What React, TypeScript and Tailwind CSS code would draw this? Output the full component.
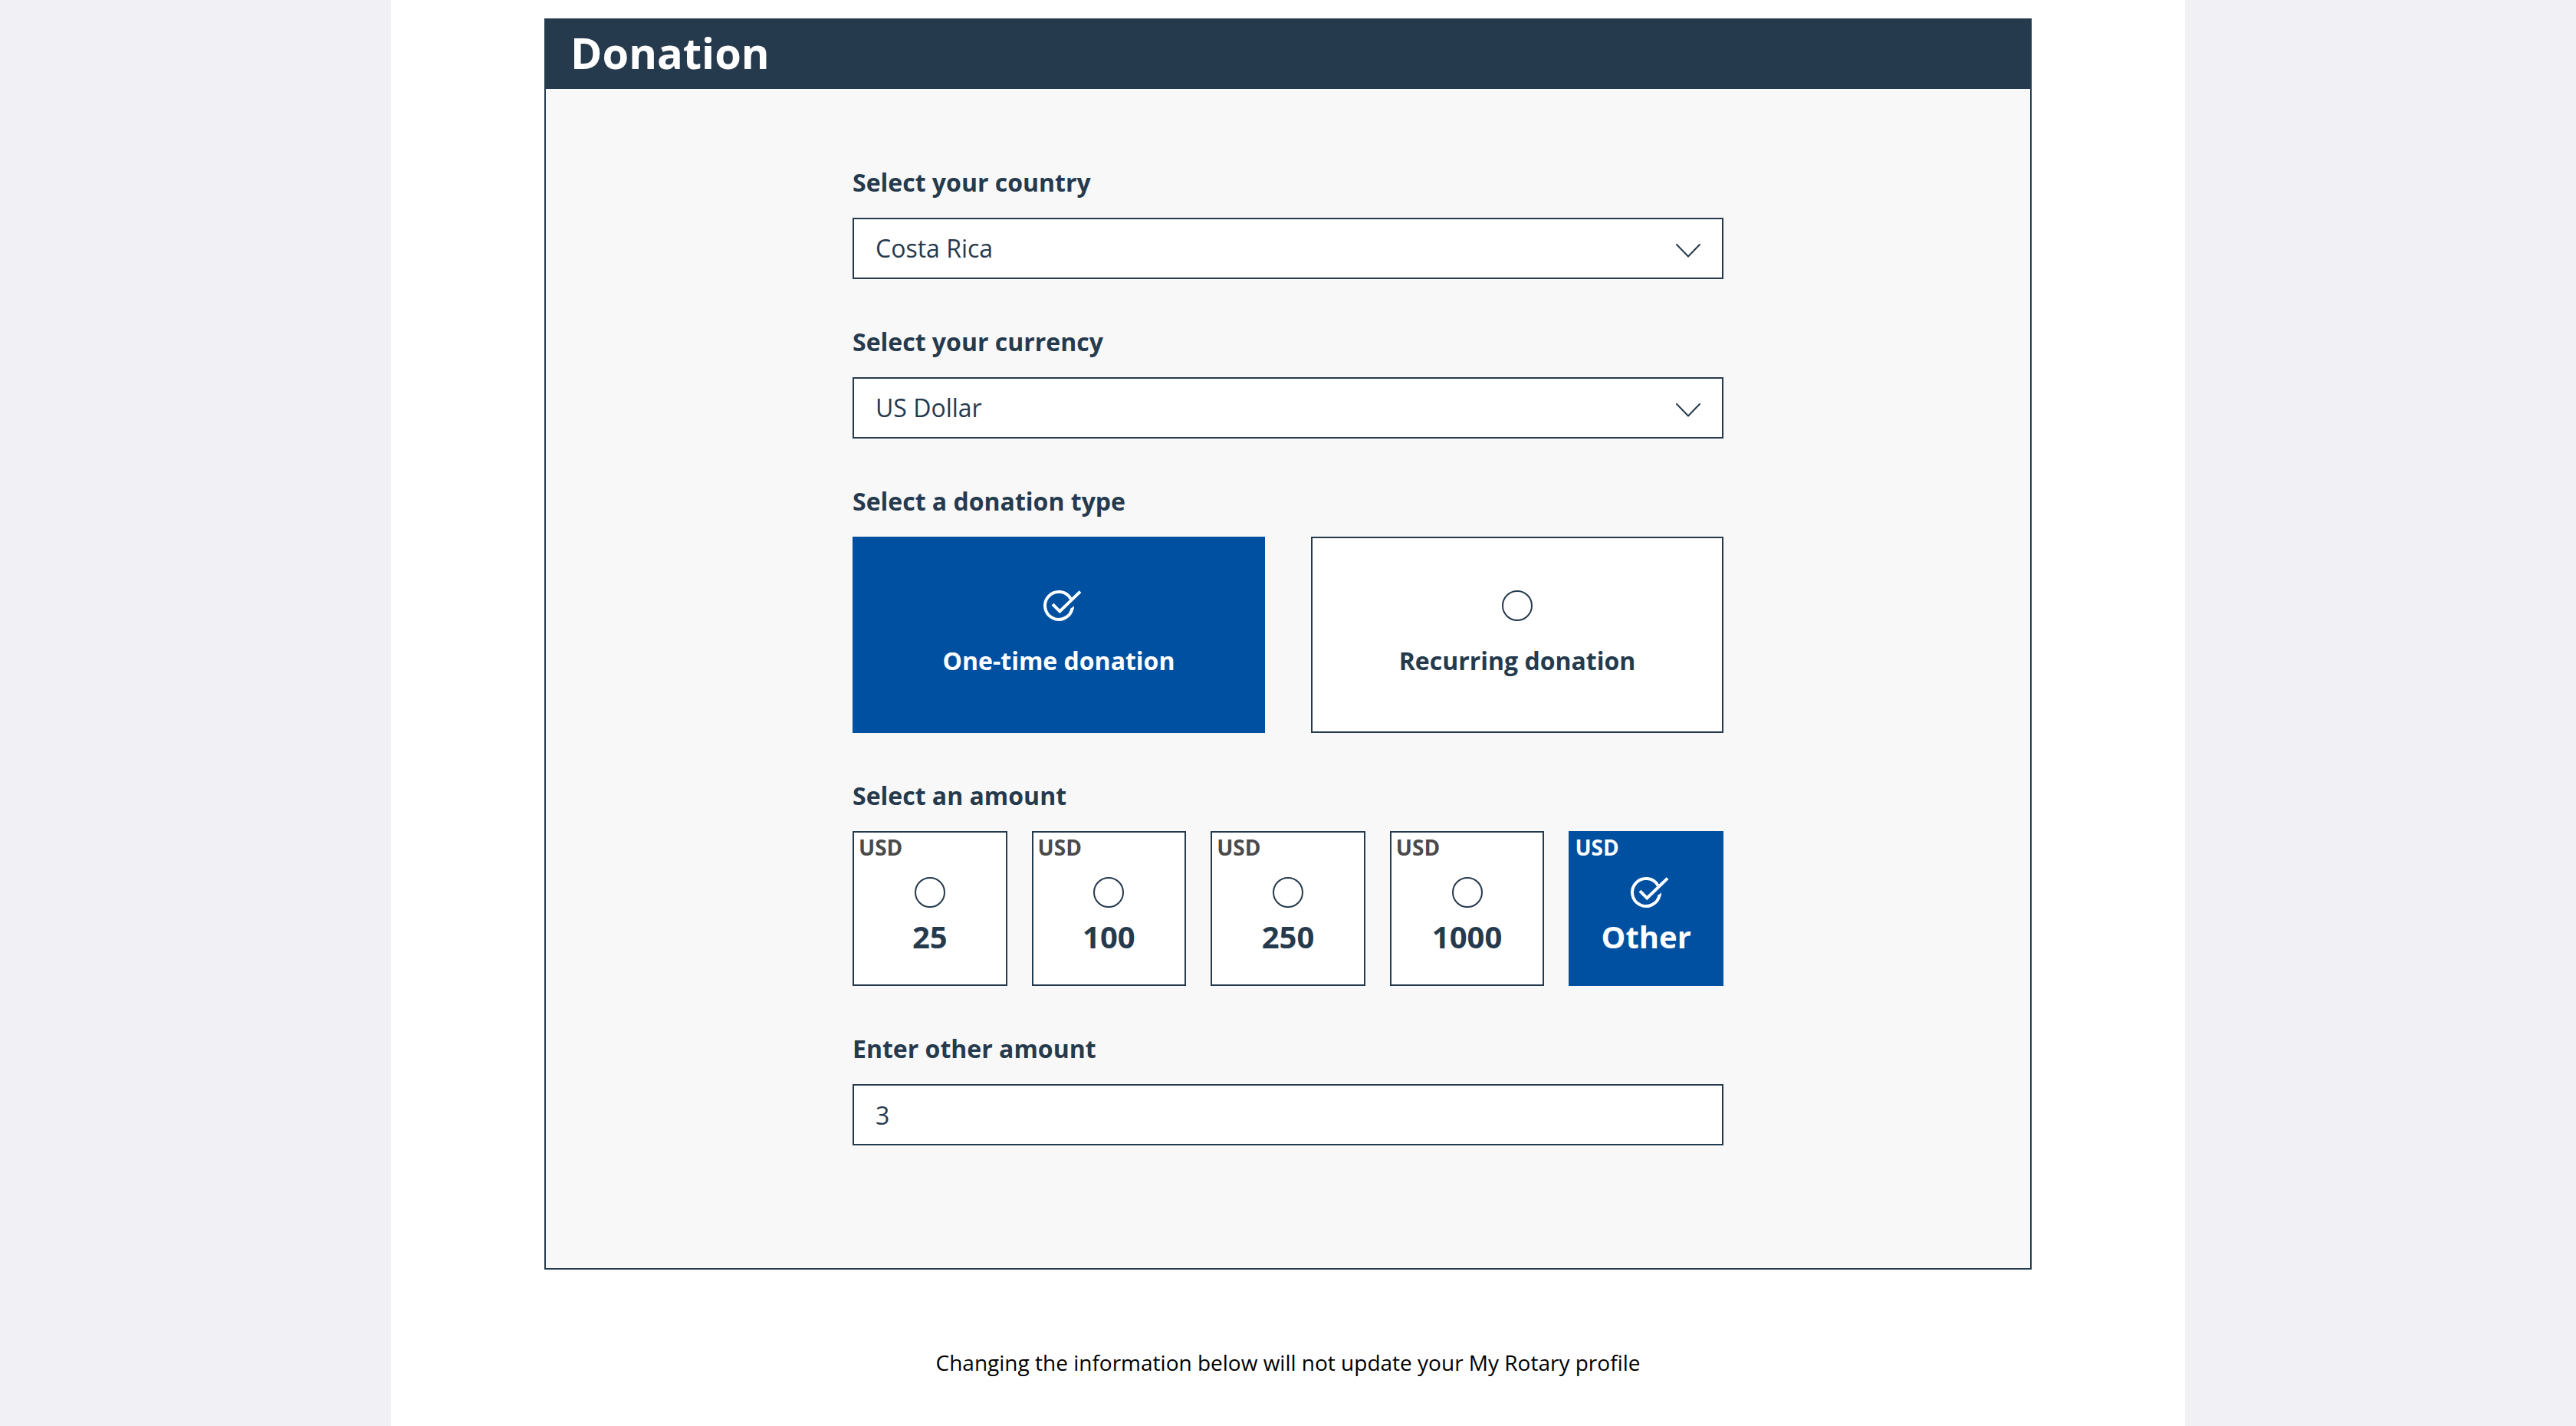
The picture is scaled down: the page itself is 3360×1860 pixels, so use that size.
import { useState, type ReactNode } from "react";

const countries = ["Costa Rica", "Canada", "Mexico", "United States"];
const currencies = ["US Dollar", "Canadian Dollar", "Euro"];
const amounts = ["25", "100", "250", "1000", "Other"];

// The tick reaches past the right edge of the box so that the ring stays centred.
function CheckIcon() {
  return (
    <svg className="size-10 overflow-visible" viewBox="0 0 40 40" fill="none" stroke="currentColor" strokeWidth="4" aria-hidden="true">
      <path d="M35.6 11A18 18 0 1 0 37.7 23.2" />
      <path d="M35.6 24L40 20.2L39.8 24Z" fill="currentColor" stroke="none" />
      <path d="M12 18.2L21.3 27.5L48 1.6" />
    </svg>
  );
}

function CircleIcon() {
  return (
    <svg className="size-10" viewBox="0 0 40 40" fill="none" stroke="currentColor" strokeWidth="2" aria-hidden="true">
      <circle cx="20" cy="20" r="19" />
    </svg>
  );
}

function Field({ id, label, children }: { id: string; label: string; children: ReactNode }) {
  return (
    <div className="flex flex-col gap-6">
      <label htmlFor={id} className="text-[32px] leading-[44px] font-bold">
        {label}
      </label>
      {children}
    </div>
  );
}

function SelectField({ id, label, options }: { id: string; label: string; options: string[] }) {
  return (
    <Field id={id} label={label}>
      <div className="relative">
        <select
          id={id}
          className="block h-20 w-full appearance-none rounded-none border-2 border-[#263a4d] bg-white px-7 text-[32px]"
        >
          {options.map((option) => (
            <option key={option}>{option}</option>
          ))}
        </select>
        <svg
          className="pointer-events-none absolute top-8 right-7 h-5 w-9"
          viewBox="0 0 36 20"
          fill="none"
          stroke="currentColor"
          strokeWidth="2"
          strokeLinecap="round"
          aria-hidden="true"
        >
          <path d="M3 3L18 18.5L33 3" />
        </svg>
      </div>
    </Field>
  );
}

type ChoiceProps = { name: string; value: string; checked: boolean; onSelect: (value: string) => void };

function TypeCard({ name, value, checked, onSelect }: ChoiceProps) {
  return (
    <label
      className={
        checked
          ? "relative flex h-64 flex-1 cursor-pointer flex-col items-center justify-center gap-[30px] border-2 border-[#0050a2] bg-[#0050a2] text-white"
          : "relative flex h-64 flex-1 cursor-pointer flex-col items-center justify-center gap-[30px] border-2 border-[#263a4d] bg-white"
      }
    >
      <input type="radio" className="sr-only" name={name} value={value} checked={checked} onChange={() => onSelect(value)} />
      {checked ? <CheckIcon /> : <CircleIcon />}
      <span className="pb-0.5 text-[32px] leading-[44px] font-bold">{value}</span>
    </label>
  );
}

function AmountCard({ name, value, checked, onSelect }: ChoiceProps) {
  return (
    <label
      className={
        checked
          ? "relative flex h-[202px] cursor-pointer flex-col items-center border-2 border-[#0050a2] bg-[#0050a2] text-white"
          : "relative flex h-[202px] cursor-pointer flex-col items-center border-2 border-[#263a4d] bg-white"
      }
    >
      <input type="radio" className="sr-only" name={name} value={value} checked={checked} onChange={() => onSelect(value)} />
      <span
        className={
          checked
            ? "self-start pl-1.5 text-[28px] leading-[38px] font-bold"
            : "self-start pl-1.5 text-[28px] leading-[38px] font-bold text-[#4a4a4a]"
        }
      >
        USD
      </span>
      <span className="mt-5">{checked ? <CheckIcon /> : <CircleIcon />}</span>
      <span className="mt-2.5 text-[40px] leading-[56px] font-bold">{value}</span>
    </label>
  );
}

export default function App() {
  const [type, setType] = useState("One-time donation");
  const [amount, setAmount] = useState("Other");
  const [other, setOther] = useState("3");

  return (
    <div className="min-h-screen bg-[#f0f0f5] font-['Open_Sans',sans-serif] text-[#263a4d]">
      <main className="mx-auto min-h-screen max-w-[2340px] bg-white pt-6">
        <section className="mx-auto max-w-[1940px] border-2 border-t-0 border-[#263a4d] bg-[#f8f8f8]">
          <h1 className="bg-[#263a4d] px-8 pb-1 text-[56px] leading-[88px] font-bold text-white">Donation</h1>
          <form className="mx-auto flex max-w-[1136px] flex-col gap-[60px] pt-[100px] pb-40">
            <SelectField id="country" label="Select your country" options={countries} />
            <SelectField id="currency" label="Select your currency" options={currencies} />
            <fieldset>
              <legend className="mb-6 text-[32px] leading-[44px] font-bold">Select a donation type</legend>
              <div className="flex gap-[60px]">
                {["One-time donation", "Recurring donation"].map((value) => (
                  <TypeCard key={value} name="type" value={value} checked={type === value} onSelect={setType} />
                ))}
              </div>
            </fieldset>
            <fieldset>
              <legend className="mb-6 text-[32px] leading-[44px] font-bold">Select an amount</legend>
              <div className="grid grid-cols-5 gap-8">
                {amounts.map((value) => (
                  <AmountCard key={value} name="amount" value={value} checked={amount === value} onSelect={setAmount} />
                ))}
              </div>
            </fieldset>
            <Field id="other" label="Enter other amount">
              <input
                id="other"
                type="text"
                inputMode="decimal"
                value={other}
                onChange={(event) => setOther(event.target.value)}
                className="h-20 w-full border-2 border-[#263a4d] bg-white px-7 text-[32px]"
              />
            </Field>
          </form>
        </section>
        <p className="pt-[100px] text-center text-[28px] leading-[42px] text-black">
          Changing the information below will not update your My Rotary profile
        </p>
      </main>
    </div>
  );
}
